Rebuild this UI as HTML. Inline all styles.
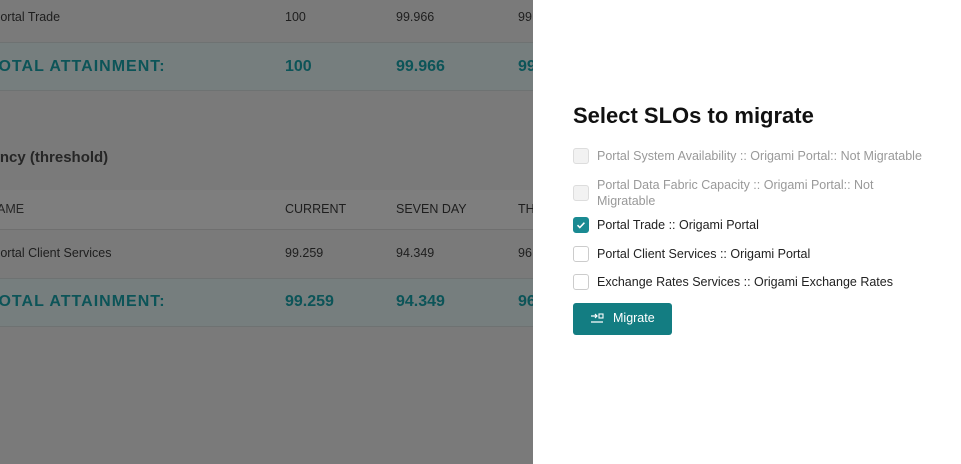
<!DOCTYPE html>
<html><head><style>
body{margin:0;width:961px;height:464px;overflow:hidden;position:relative;background:#7a7a7a;font-family:"Liberation Sans",sans-serif}
.l{position:absolute;left:0;width:533px;height:464px;overflow:hidden;color:#1e1e1e}
.t{position:absolute;font-size:12.5px;white-space:nowrap}
.row{position:absolute;left:0;width:533px}
.tot{background:#767e7e;border-top:1px solid #6e7272;border-bottom:1px solid #6e7272}
.big{font-size:16px;font-weight:bold;color:#0c5458;letter-spacing:1px}
.num{font-size:16px;font-weight:bold;color:#0c5458}
.p{position:absolute;left:533px;top:0;width:428px;height:464px;background:#fff}
.cb{position:absolute;left:40px;width:14px;height:14px;border:1px solid #ccc;border-radius:3px;background:#fff}
.cb.d{background:#f2f2f2;border-color:#ddd}
.lab{position:absolute;left:64px;font-size:12.5px;color:#222;line-height:16px}
.lab.d{color:#999}
</style></head><body>
<div class="l">
<div class="t" style="left:-8px;top:10px">Portal Trade</div>
<div class="t" style="left:285px;top:10px">100</div>
<div class="t" style="left:396px;top:10px">99.966</div>
<div class="t" style="left:518px;top:10px">99.9</div>
<div class="row tot" style="top:42px;height:47px"></div>
<div class="t big" style="left:-12px;top:58px">TOTAL ATTAINMENT:</div>
<div class="t num" style="left:285px;top:58px">100</div>
<div class="t num" style="left:396px;top:58px">99.966</div>
<div class="t num" style="left:518px;top:58px">99.9</div>
<div class="t" style="left:-31px;top:149px;font-size:15px;font-weight:bold;color:#262626">Latency (threshold)</div>
<div class="row" style="top:190px;height:39px;background:#7e7e7e;border-bottom:1px solid #6f6f6f"></div>
<div class="t" style="left:-12px;top:202px;color:#262626">NAME</div>
<div class="t" style="left:285px;top:202px">CURRENT</div>
<div class="t" style="left:396px;top:202px">SEVEN DAY</div>
<div class="t" style="left:518px;top:202px">THIRTY</div>
<div class="t" style="left:-8px;top:246px">Portal Client Services</div>
<div class="t" style="left:285px;top:246px">99.259</div>
<div class="t" style="left:396px;top:246px">94.349</div>
<div class="t" style="left:518px;top:246px">96.1</div>
<div class="row tot" style="top:278px;height:47px"></div>
<div class="t big" style="left:-12px;top:293px">TOTAL ATTAINMENT:</div>
<div class="t num" style="left:285px;top:293px">99.259</div>
<div class="t num" style="left:396px;top:293px">94.349</div>
<div class="t num" style="left:518px;top:293px">96.1</div>
</div>
<div class="p">
<div style="position:absolute;left:40px;top:103px;font-size:22px;font-weight:bold;color:#111">Select SLOs to migrate</div>
<div class="cb d" style="top:148px"></div><div class="lab d" style="top:148px">Portal System Availability :: Origami Portal:: Not Migratable</div>
<div class="cb d" style="top:185px"></div><div class="lab d" style="top:177px;width:300px">Portal Data Fabric Capacity :: Origami Portal:: Not Migratable</div>
<div class="cb" style="top:217px;background:#1a8a92;border-color:#1a8a92"><svg width="14" height="14" viewBox="0 0 14 14"><path d="M3.5 7.2l2.3 2.3 4.6-4.8" stroke="#fff" stroke-width="1.5" fill="none"/></svg></div><div class="lab" style="top:217px">Portal Trade :: Origami Portal</div>
<div class="cb" style="top:246px"></div><div class="lab" style="top:246px">Portal Client Services :: Origami Portal</div>
<div class="cb" style="top:274px"></div><div class="lab" style="top:274px">Exchange Rates Services :: Origami Exchange Rates</div>
<div style="position:absolute;left:40px;top:303px;width:99px;height:32px;background:#137d82;border-radius:3px;color:#fff;font-size:12.5px">
<svg style="position:absolute;left:17px;top:9px" width="14" height="12" viewBox="0 0 14 12"><path d="M1 4h6M5 2l2 2-2 2M1 10h12" stroke="#fff" stroke-width="1.2" fill="none"/><rect x="9" y="2" width="4" height="4" stroke="#fff" stroke-width="1.1" fill="none"/></svg>
<span style="position:absolute;left:40px;top:8px">Migrate</span></div>
</div>
</body></html>
